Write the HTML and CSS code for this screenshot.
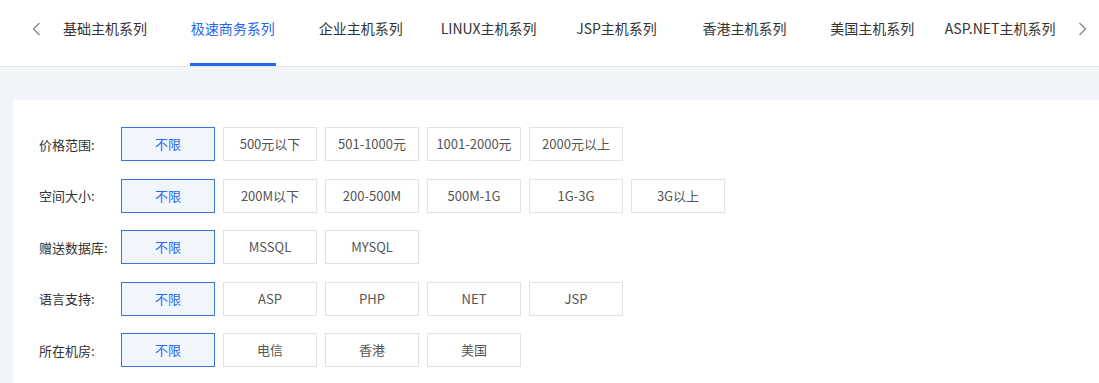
FILE: index.html
```html
<!DOCTYPE html>
<html lang="zh-CN">
  <head>
    <meta charset="UTF-8" />
    <meta name="viewport" content="width=device-width, initial-scale=1.0" />
    <title>主机系列</title>
    <link rel="stylesheet" href="styles.css">
  </head>
  <body>
    <div class="tabbar">
      <span class="arrow">
        <svg width="9" height="14" viewBox="0 0 9 14"><path d="M7.5 1 L1.5 7 L7.5 13" fill="none" stroke="#8a8a8a" stroke-width="1.4"/></svg>
      </span>
      <div class="tabs">
        <div class="tab">基础主机系列</div>
        <div class="tab active">极速商务系列</div>
        <div class="tab">企业主机系列</div>
        <div class="tab">LINUX主机系列</div>
        <div class="tab">JSP主机系列</div>
        <div class="tab">香港主机系列</div>
        <div class="tab">美国主机系列</div>
        <div class="tab">ASP.NET主机系列</div>
      </div>
      <span class="arrow">
        <svg width="9" height="14" viewBox="0 0 9 14"><path d="M1.5 1 L7.5 7 L1.5 13" fill="none" stroke="#8a8a8a" stroke-width="1.4"/></svg>
      </span>
    </div>

    <div class="content">
      <div class="card">
        <div class="filter-row">
          <div class="label">价格范围:</div>
          <div class="opt active">不限</div>
          <div class="opt">500元以下</div>
          <div class="opt">501-1000元</div>
          <div class="opt">1001-2000元</div>
          <div class="opt">2000元以上</div>
        </div>
        <div class="filter-row">
          <div class="label">空间大小:</div>
          <div class="opt active">不限</div>
          <div class="opt">200M以下</div>
          <div class="opt">200-500M</div>
          <div class="opt">500M-1G</div>
          <div class="opt">1G-3G</div>
          <div class="opt">3G以上</div>
        </div>
        <div class="filter-row">
          <div class="label">赠送数据库:</div>
          <div class="opt active">不限</div>
          <div class="opt">MSSQL</div>
          <div class="opt">MYSQL</div>
        </div>
        <div class="filter-row">
          <div class="label">语言支持:</div>
          <div class="opt active">不限</div>
          <div class="opt">ASP</div>
          <div class="opt">PHP</div>
          <div class="opt">NET</div>
          <div class="opt">JSP</div>
        </div>
        <div class="filter-row">
          <div class="label">所在机房:</div>
          <div class="opt active">不限</div>
          <div class="opt">电信</div>
          <div class="opt">香港</div>
          <div class="opt">美国</div>
        </div>
      </div>
    </div>
  </body>
</html>
```

FILE: styles.css
```css
body {
  margin: 0;
  font-family: "Noto Sans CJK SC", "Noto Sans", sans-serif;
  color: #333;
  background-color: #f1f4f8;
  height: 383px;
  overflow: hidden;
}

.tabbar {
  display: flex;
  align-items: flex-start;
  height: 66px;
  background-color: #fff;
  border-bottom: 1px solid #e4e6ea;
  padding-left: 31px;
}

.arrow {
  display: flex;
  align-items: center;
  justify-content: center;
  width: 10px;
  height: 57px;
}

.tabs {
  display: flex;
  height: 66px;
}

.tab {
  position: relative;
  width: 127.9px;
  line-height: 56px;
  text-align: center;
  font-size: 14px;
  color: #333;
  white-space: nowrap;
}

.tab.active {
  color: #2468f2;
}

.tab.active::after {
  content: "";
  position: absolute;
  left: 21px;
  right: 21px;
  bottom: 0;
  height: 3px;
  background-color: #2468f2;
}

.tabs + .arrow {
  margin-left: 13px;
}

.content {
  padding: 33px 0 0 13px;
}

.card {
  display: flex;
  flex-direction: column;
  gap: 17.5px;
  background-color: #fff;
  padding: 27px 0 16px 26px;
}

.filter-row {
  display: flex;
  align-items: center;
  gap: 8px;
}

.label {
  width: 74px;
  font-size: 13px;
  color: #333;
}

.opt {
  box-sizing: border-box;
  width: 94px;
  height: 34px;
  line-height: 32px;
  text-align: center;
  font-size: 13px;
  color: #555;
  border: 1px solid #e1e1e1;
  background-color: #fff;
}

.opt.active {
  color: #2468f2;
  border-color: #3b73e0;
  background-color: #f1f5fc;
}
```
